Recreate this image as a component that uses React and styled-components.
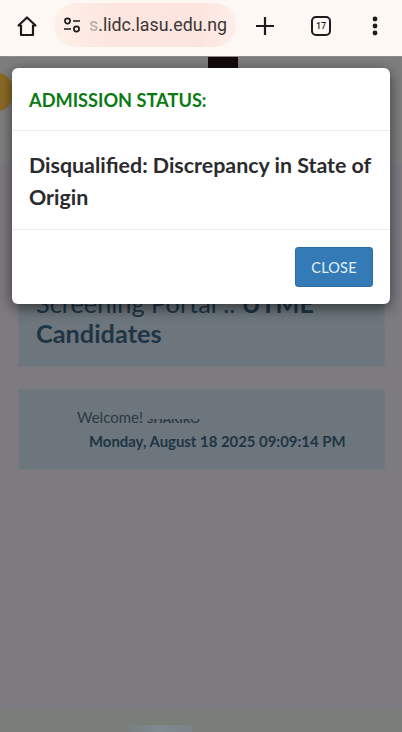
import React from 'react';
import styled, { createGlobalStyle } from 'styled-components';

const Global = createGlobalStyle`
    html, body { margin: 0; padding: 0; background: #7e7b80; }
    * { box-sizing: border-box; }
`;

const PAGE_FONT = '"Lato", "Noto Sans", sans-serif';

const Screen = styled.div`
    position: relative;
    width: 402px;
    height: 732px;
    overflow: hidden;
    display: flex;
    flex-direction: column;
    background-color: #7e7b80;
    font-family: ${PAGE_FONT};
`;

const Toolbar = styled.div`
    height: 57px;
    flex: none;
    display: flex;
    align-items: flex-start;
    background-color: #fef8f4;
    color: #1d1b1c;
    border-bottom: 1px solid #8d8a88;
`;

const ToolSlot = styled.div`
    width: ${props => props.$width}px;
    height: 52px;
    flex: none;
    display: flex;
    align-items: center;
    justify-content: center;
`;

const AddressPill = styled.div`
    width: 182px;
    height: 44px;
    margin-top: 3px;
    flex: none;
    display: flex;
    align-items: center;
    gap: 8px;
    padding-left: 9px;
    border-radius: 22px;
    background: linear-gradient(90deg, #fdf0ea 0%, #fde6e0 30%, #fde5df 80%, #fdeee9 100%);
`;

const AddressText = styled.span`
    font-family: "Roboto", sans-serif;
    font-size: 17.8px;
    line-height: 44px;
    white-space: nowrap;
    color: #3a3637;
`;

const FadedLetter = styled.span`
    color: #b3aaa8;
`;

const TabCount = styled.div`
    width: 20px;
    height: 20px;
    display: flex;
    align-items: center;
    justify-content: center;
    border: 2px solid #1d1b1c;
    border-radius: 5px;
    font-family: "Roboto", sans-serif;
    font-size: 9px;
    font-weight: 500;
`;

const SiteHeader = styled.div`
    position: relative;
    height: 106px;
    flex: none;
    background-color: #7e7e7f;
`;

const LogoSeal = styled.div`
    position: absolute;
    left: -26px;
    top: 15px;
    width: 40px;
    height: 40px;
    border-radius: 50%;
    background-color: #8a6a25;
`;

const LogoCrest = styled.div`
    position: absolute;
    left: 208px;
    top: 0;
    width: 30px;
    height: 14px;
    background-color: #140a0b;
`;

const Main = styled.div`
    flex: 1;
    display: flex;
    flex-direction: column;
    gap: 22px;
    padding: 27px 17px 0 18px;
`;

const Panel = styled.div`
    height: ${props => props.$height}px;
    display: flex;
    flex-direction: column;
    justify-content: ${props => (props.$end ? 'flex-end' : 'flex-start')};
    padding: ${props => props.$padding};
    background-color: #6c767c;
    border: 1px solid #71797b;
    color: #1f3545;
`;

const PortalTitle = styled.h2`
    margin: 0;
    font-size: 25.3px;
    line-height: 30px;
    font-weight: 400;
`;

const WelcomeLine = styled.div`
    font-size: 15px;
    line-height: 20px;
    color: #2d3943;
`;

const HiddenName = styled.span`
    display: inline-block;
    font-size: 12px;
    font-weight: 700;
    clip-path: inset(50% 0 0 0);
`;

const DateLine = styled.div`
    margin-top: 2px;
    margin-left: 12px;
    font-size: 14.9px;
    line-height: 20px;
    font-weight: 700;
    white-space: nowrap;
`;

const Footer = styled.div`
    position: relative;
    height: 22px;
    flex: none;
    background-color: #7b7d79;
`;

const FooterMark = styled.div`
    position: absolute;
    left: 128px;
    top: 15px;
    width: 64px;
    height: 7px;
    border-radius: 4px 4px 0 0;
    background: linear-gradient(90deg, #767f82, #7e8a90, #7a8387);
`;

const Modal = styled.div`
    position: absolute;
    left: 12px;
    top: 68px;
    width: 378px;
    height: 236px;
    display: flex;
    flex-direction: column;
    background-color: #ffffff;
    border-radius: 6px;
    box-shadow: 0 4px 14px rgba(0, 0, 0, 0.55);
`;

const ModalHeader = styled.div`
    height: 63px;
    flex: none;
    display: flex;
    align-items: center;
    padding: 2px 17px 0;
    border-bottom: 1px solid #ececec;
`;

const ModalTitle = styled.h4`
    margin: 0;
    font-size: 18.2px;
    font-weight: 700;
    color: #0b7a14;
    white-space: nowrap;
`;

const ModalBody = styled.div`
    height: 99px;
    flex: none;
    padding: 18px 17px 0;
    border-bottom: 1px solid #ececec;
    font-size: 21.4px;
    line-height: 32px;
    font-weight: 700;
    color: #2b2b2e;
`;

const ModalFooter = styled.div`
    flex: 1;
    display: flex;
    justify-content: flex-end;
    padding: 17px 17px 0 0;
`;

const CloseButton = styled.button`
    width: 78px;
    height: 40px;
    border: 1px solid #2e6da4;
    border-radius: 3px;
    background-color: #337ab7;
    color: #e4f1f8;
    font-family: ${PAGE_FONT};
    font-size: 14.5px;
    letter-spacing: 0.2px;
`;

const Icon = styled.svg`
    display: block;
    fill: none;
    stroke: currentColor;
    stroke-width: ${props => props.$stroke || 2.2};
`;

const App = () => {
    return (
        <Screen>
            <Global />
            <Toolbar>
                <ToolSlot $width={54}>
                    <Icon width="24" height="24" viewBox="0 0 24 24">
                        <path d="M12 3.5 3.5 11.5H6V21h12v-9.5h2.5L12 3.5Z" strokeLinejoin="round" />
                    </Icon>
                </ToolSlot>
                <AddressPill>
                    <Icon width="18" height="16" viewBox="0 0 18 16" $stroke={1.7}>
                        <circle cx="4.5" cy="4" r="2.6" />
                        <path d="M10 4h7M1 12h7" />
                        <circle cx="13.5" cy="12" r="2.6" />
                    </Icon>
                    <AddressText><FadedLetter>s</FadedLetter>.lidc.lasu.edu.ng</AddressText>
                </AddressPill>
                <ToolSlot $width={58}>
                    <Icon width="20" height="20" viewBox="0 0 20 20">
                        <path d="M10 1v18M1 10h18" />
                    </Icon>
                </ToolSlot>
                <ToolSlot $width={54}>
                    <TabCount>17</TabCount>
                </ToolSlot>
                <ToolSlot $width={54}>
                    <Icon width="6" height="20" viewBox="0 0 6 20" stroke="none">
                        <circle cx="3" cy="3" r="2.4" fill="#1d1b1c" stroke="none" />
                        <circle cx="3" cy="10" r="2.4" fill="#1d1b1c" stroke="none" />
                        <circle cx="3" cy="17" r="2.4" fill="#1d1b1c" stroke="none" />
                    </Icon>
                </ToolSlot>
            </Toolbar>

            <SiteHeader>
                <LogoSeal />
                <LogoCrest />
            </SiteHeader>

            <Main>
                <Panel $height={177} $end $padding="0 17px 18px">
                    <PortalTitle>Screening Portal .. <strong>UTME Candidates</strong></PortalTitle>
                </Panel>
                <Panel $height={81} $padding="17px 0 0 58px">
                    <WelcomeLine>Welcome! <HiddenName>SHAKIRO</HiddenName></WelcomeLine>
                    <DateLine>Monday, August 18 2025 09:09:14 PM</DateLine>
                </Panel>
            </Main>

            <Footer>
                <FooterMark />
            </Footer>

            <Modal>
                <ModalHeader>
                    <ModalTitle>ADMISSION STATUS:</ModalTitle>
                </ModalHeader>
                <ModalBody>Disqualified: Discrepancy in State of Origin</ModalBody>
                <ModalFooter>
                    <CloseButton>CLOSE</CloseButton>
                </ModalFooter>
            </Modal>
        </Screen>
    );
};

export default App;
